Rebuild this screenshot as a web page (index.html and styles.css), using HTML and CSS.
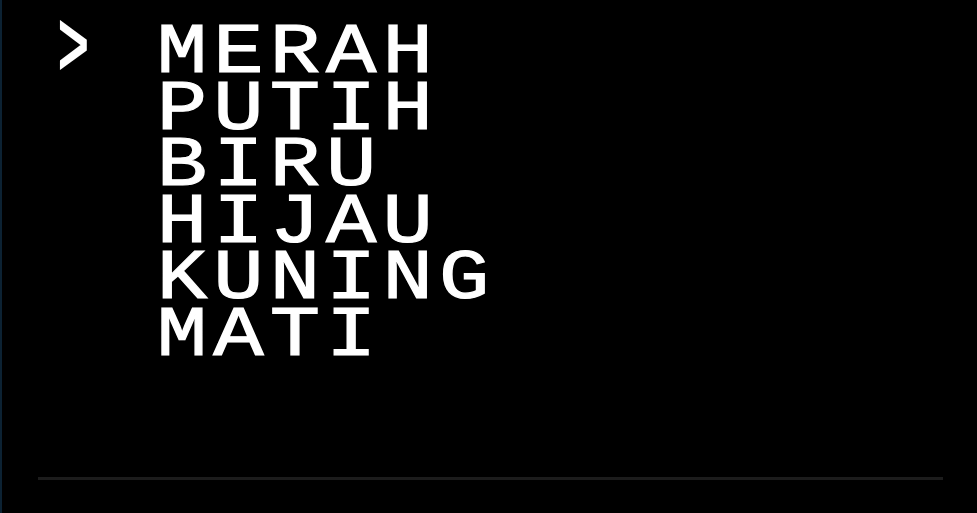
FILE: index.html
```html
<!DOCTYPE html>
<html lang="id">
<head>
<meta charset="utf-8">
<title>Menu</title>
<link rel="stylesheet" href="styles.css">
</head>
<body>
<div class="screen">
  <ul class="menu">
    <li class="item selected"><span class="cursor">&gt;</span> <span class="label">MERAH</span></li>
    <li class="item"><span class="cursor"> </span> <span class="label">PUTIH</span></li>
    <li class="item"><span class="cursor"> </span> <span class="label">BIRU</span></li>
    <li class="item"><span class="cursor"> </span> <span class="label">HIJAU</span></li>
    <li class="item"><span class="cursor"> </span> <span class="label">KUNING</span></li>
    <li class="item"><span class="cursor"> </span> <span class="label">MATI</span></li>
  </ul>
  <div class="rule"></div>
</div>
</body>
</html>
```
FILE: styles.css
```css
html, body {
  margin: 0;
  padding: 0;
  background: #000;
}
.screen {
  box-sizing: border-box;
  height: 513px;
  border-left: 2px solid #0c2233;
  background: #000;
  padding-top: 26px;
  overflow: hidden;
}
.menu {
  list-style: none;
  margin: 0;
  padding: 0 0 0 42px;
  font-family: "Liberation Mono", "DejaVu Sans Mono", monospace;
  font-weight: normal;
  font-size: 84px;
  line-height: 68px;
  letter-spacing: 6px;
  color: #fff;
  -webkit-text-stroke: 1.4px #fff;
  transform: scaleY(0.83);
  transform-origin: 0 0;
}
.item {
  display: block;
  height: 68px;
  white-space: pre;
}
.cursor {
  display: inline-block;
  transform: translate(3px, -1px) scale(0.62, 1.3);
  transform-origin: 50% 60%;
  -webkit-text-stroke: 2.4px #fff;
}
.rule {
  margin: 43px 0 0 36px;
  width: 905px;
  height: 3px;
  background: #1c1c1c;
}
```
